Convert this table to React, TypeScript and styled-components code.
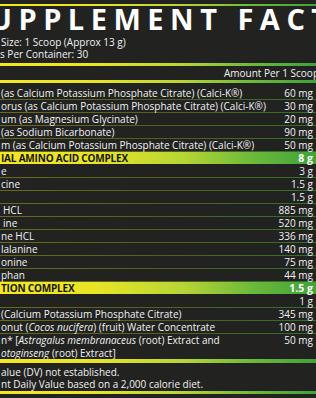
import React from "react";
import styled, { createGlobalStyle } from "styled-components";

const GlobalStyle = createGlobalStyle`
  html, body { margin: 0; padding: 0; background: #222321; }
  body { overflow: hidden; }
`;

const GRAD = "linear-gradient(90deg, #f4e81e 0%, #e8e526 30%, #b7d535 58%, #6cb93a 80%, #3fa23a 100%)";

const Panel = styled.div`
  width: 316px;
  height: 398px;
  overflow: hidden;
  background: #222321;
  color: #f1f1f1;
  font-family: "Open Sans", "Noto Sans", sans-serif;
  font-size: 10px;
  display: flex;
  flex-direction: column;
  & > * { flex-shrink: 0; }
`;

const Rule = styled.div<{ $h: number; $mt?: number }>`
  height: ${(p) => p.$h}px;
  margin-top: ${(p) => p.$mt ?? 0}px;
  background: ${GRAD};
`;

const Title = styled.div`
  font-size: 29px;
  font-weight: 700;
  letter-spacing: 6.5px;
  line-height: 26px;
  height: 26px;
  margin-left: -10px;
  white-space: nowrap;
  color: #ffffff;
`;

const Info = styled.div`
  display: flex;
  flex-direction: column;
  margin-top: 4px;
  height: 24px;
`;

const InfoLine = styled.div<{ $indent?: number }>`
  line-height: 12px;
  height: 12px;
  padding-left: ${(p) => p.$indent ?? 1}px;
  white-space: nowrap;
`;

const AmountHeader = styled.div`
  line-height: 14px;
  height: 14px;
  text-align: right;
  white-space: nowrap;
  margin-right: -3px;
`;

const Rows = styled.div`
  display: flex;
  flex-direction: column;
  margin-top: 4px;
`;

const Row = styled.div<{ $lines?: number }>`
  display: flex;
  justify-content: space-between;
  align-items: flex-start;
  height: ${(p) => (p.$lines ?? 1) * 13 - ((p.$lines ?? 1) > 1 ? 1 : 0)}px;
  line-height: 13px;
  background: linear-gradient(90deg, #686a1c 0%, #565e1f 50%, #30702a 100%) bottom / 100% 1px no-repeat;
`;

const LastRow = styled(Row)`
  background: none;
`;

const Name = styled.div<{ $indent?: number }>`
  white-space: nowrap;
  padding-left: ${(p) => p.$indent ?? 1}px;
  em { font-style: italic; }
`;

const Amount = styled.div`
  white-space: nowrap;
  padding-right: 3px;
  text-align: right;
`;

const Band = styled.div`
  display: flex;
  justify-content: space-between;
  align-items: center;
  height: 12px;
  line-height: 12px;
  margin-bottom: 1px;
  font-size: 10px;
  font-weight: 700;
  background: ${GRAD};
`;

const BandName = styled.div`
  color: #151515;
  padding-left: 1px;
  letter-spacing: -0.2px;
  white-space: nowrap;
`;

const BandAmount = styled.div`
  color: #ffffff;
  font-size: 10.5px;
  padding-right: 3px;
`;

const Footnotes = styled.div`
  display: flex;
  flex-direction: column;
  margin-top: 3px;
`;

const Foot = styled.div`
  height: 12px;
  line-height: 12px;
  padding-left: 1px;
  white-space: nowrap;
`;

type R = { name: React.ReactNode; amt: string; indent?: number };

const group1: R[] = [
  { name: "(as Calcium Potassium Phosphate Citrate) (Calci-K®)", amt: "60 mg" },
  { name: "orus (as Calcium Potassium Phosphate Citrate) (Calci-K®)", amt: "30 mg" },
  { name: "um (as Magnesium Glycinate)", amt: "20 mg" },
  { name: "(as Sodium Bicarbonate)", amt: "90 mg" },
  { name: "m (as Calcium Potassium Phosphate Citrate) (Calci-K®)", amt: "50 mg" },
];

const group2: R[] = [
  { name: "e", amt: "3 g" },
  { name: "cine", amt: "1.5 g" },
  { name: "", amt: "1.5 g" },
  { name: "HCL", amt: "885 mg", indent: 3 },
  { name: "ine", amt: "520 mg", indent: 3 },
  { name: "ne HCL", amt: "336 mg" },
  { name: "lalanine", amt: "140 mg" },
  { name: "onine", amt: "75 mg" },
  { name: "phan", amt: "44 mg" },
];

const group3: R[] = [
  { name: "", amt: "1 g" },
  { name: "(Calcium Potassium Phosphate Citrate)", amt: "345 mg" },
  {
    name: (
      <>
        onut (<em>Cocos nucifera</em>) (fruit) Water Concentrate
      </>
    ),
    amt: "100 mg",
  },
];

const renderRows = (rows: R[]) =>
  rows.map((r, i) => (
    <Row key={i}>
      <Name $indent={r.indent}>{r.name}</Name>
      <Amount>{r.amt}</Amount>
    </Row>
  ));

export default function App() {
  return (
    <>
      <GlobalStyle />
      <Panel>
        <Rule $h={2} $mt={4} />
        <Title>UPPLEMENT FACTS</Title>
        <Info>
          <InfoLine>Size: 1 Scoop (Approx 13 g)</InfoLine>
          <InfoLine $indent={-3}>s Per Container: 30</InfoLine>
        </Info>
        <Rule $h={3} $mt={3} />
        <AmountHeader>Amount Per 1 Scoop</AmountHeader>
        <Rule $h={3} />
        <Rows>
          {renderRows(group1)}
          <Band>
            <BandName>IAL AMINO ACID COMPLEX</BandName>
            <BandAmount>8 g</BandAmount>
          </Band>
          {renderRows(group2)}
          <Band>
            <BandName>TION COMPLEX</BandName>
            <BandAmount>1.5 g</BandAmount>
          </Band>
          {renderRows(group3)}
          <LastRow $lines={2}>
            <Name>
              n* [<em>Astragalus membranaceus</em> (root) Extract and
              <br />
              <em>otoginseng</em> (root) Extract]
            </Name>
            <Amount>50 mg</Amount>
          </LastRow>
        </Rows>
        <Rule $h={4} />
        <Footnotes>
          <Foot>alue (DV) not established.</Foot>
          <Foot>nt Daily Value based on a 2,000 calorie diet.</Foot>
        </Footnotes>
        <Rule $h={3} $mt={1} />
      </Panel>
    </>
  );
}
